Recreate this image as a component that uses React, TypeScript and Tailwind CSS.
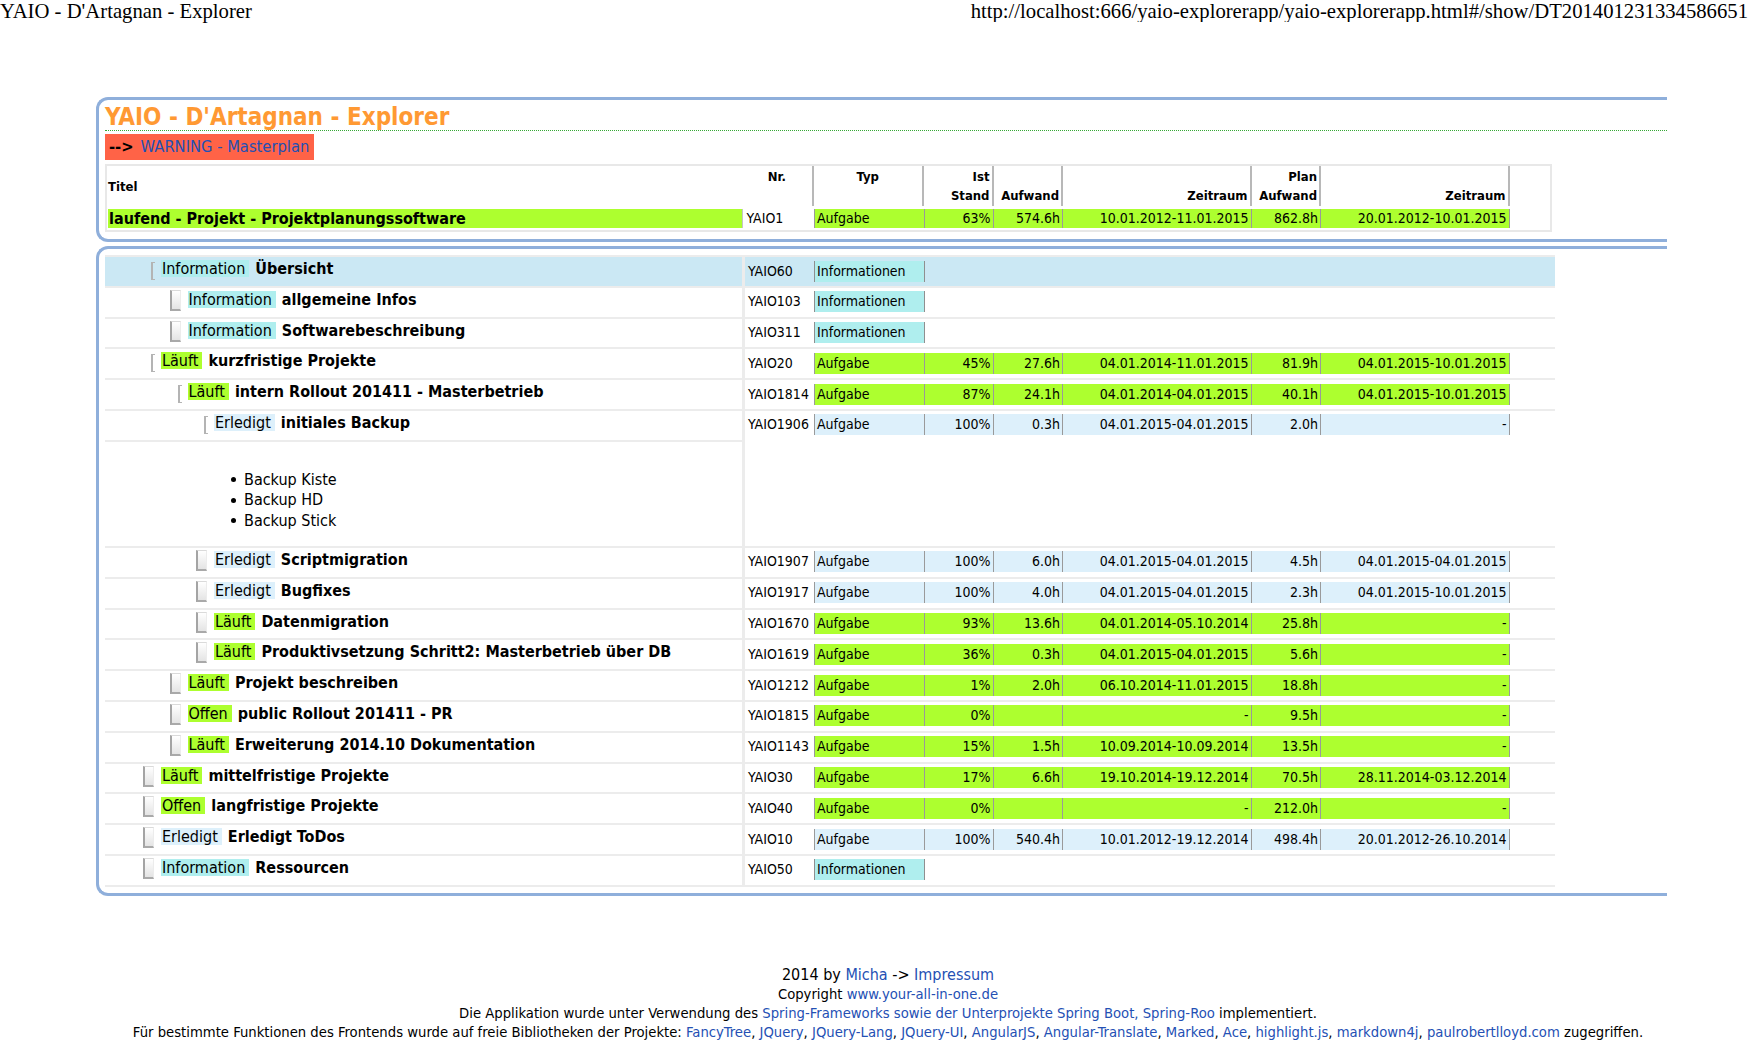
import React from 'react';

const F = "font-['DejaVu_Sans_Condensed','DejaVu_Sans',sans-serif] [font-stretch:semi-condensed]";

type Status = 'info' | 'run' | 'open' | 'done';
type Row = {
  level: 1 | 2 | 3;
  exp?: boolean;
  status: Status;
  title: string;
  nr: string;
  ist?: string;
  aufw?: string;
  zr?: string;
  plan?: string;
  zr2?: string;
  desc?: string[];
  hl?: boolean;
};

const rows: Row[] = [
  { level: 1, exp: true, status: 'info', title: 'Übersicht', nr: 'YAIO60', hl: true },
  { level: 2, status: 'info', title: 'allgemeine Infos', nr: 'YAIO103' },
  { level: 2, status: 'info', title: 'Softwarebeschreibung', nr: 'YAIO311' },
  { level: 1, exp: true, status: 'run', title: 'kurzfristige Projekte', nr: 'YAIO20', ist: '45%', aufw: '27.6h', zr: '04.01.2014-11.01.2015', plan: '81.9h', zr2: '04.01.2015-10.01.2015' },
  { level: 2, exp: true, status: 'run', title: 'intern Rollout 201411 - Masterbetrieb', nr: 'YAIO1814', ist: '87%', aufw: '24.1h', zr: '04.01.2014-04.01.2015', plan: '40.1h', zr2: '04.01.2015-10.01.2015' },
  { level: 3, exp: true, status: 'done', title: 'initiales Backup', nr: 'YAIO1906', ist: '100%', aufw: '0.3h', zr: '04.01.2015-04.01.2015', plan: '2.0h', zr2: '-', desc: ['Backup Kiste', 'Backup HD', 'Backup Stick'] },
  { level: 3, status: 'done', title: 'Scriptmigration', nr: 'YAIO1907', ist: '100%', aufw: '6.0h', zr: '04.01.2015-04.01.2015', plan: '4.5h', zr2: '04.01.2015-04.01.2015' },
  { level: 3, status: 'done', title: 'Bugfixes', nr: 'YAIO1917', ist: '100%', aufw: '4.0h', zr: '04.01.2015-04.01.2015', plan: '2.3h', zr2: '04.01.2015-10.01.2015' },
  { level: 3, status: 'run', title: 'Datenmigration', nr: 'YAIO1670', ist: '93%', aufw: '13.6h', zr: '04.01.2014-05.10.2014', plan: '25.8h', zr2: '-' },
  { level: 3, status: 'run', title: 'Produktivsetzung Schritt2: Masterbetrieb über DB', nr: 'YAIO1619', ist: '36%', aufw: '0.3h', zr: '04.01.2015-04.01.2015', plan: '5.6h', zr2: '-' },
  { level: 2, status: 'run', title: 'Projekt beschreiben', nr: 'YAIO1212', ist: '1%', aufw: '2.0h', zr: '06.10.2014-11.01.2015', plan: '18.8h', zr2: '-' },
  { level: 2, status: 'open', title: 'public Rollout 201411 - PR', nr: 'YAIO1815', ist: '0%', aufw: '', zr: '-', plan: '9.5h', zr2: '-' },
  { level: 2, status: 'run', title: 'Erweiterung 2014.10 Dokumentation', nr: 'YAIO1143', ist: '15%', aufw: '1.5h', zr: '10.09.2014-10.09.2014', plan: '13.5h', zr2: '-' },
  { level: 1, status: 'run', title: 'mittelfristige Projekte', nr: 'YAIO30', ist: '17%', aufw: '6.6h', zr: '19.10.2014-19.12.2014', plan: '70.5h', zr2: '28.11.2014-03.12.2014' },
  { level: 1, status: 'open', title: 'langfristige Projekte', nr: 'YAIO40', ist: '0%', aufw: '', zr: '-', plan: '212.0h', zr2: '-' },
  { level: 1, status: 'done', title: 'Erledigt ToDos', nr: 'YAIO10', ist: '100%', aufw: '540.4h', zr: '10.01.2012-19.12.2014', plan: '498.4h', zr2: '20.01.2012-26.10.2014' },
  { level: 1, status: 'info', title: 'Ressourcen', nr: 'YAIO50' },
];

const badgeLabel: Record<Status, string> = { info: 'Information', run: 'Läuft', open: 'Offen', done: 'Erledigt' };
const bgOf: Record<Status, string> = {
  info: 'bg-[#afeeee]',
  run: 'bg-[#adff2f]',
  open: 'bg-[#adff2f]',
  done: 'bg-[#ddf0fb]',
};
const levelPad: Record<number, string> = { 1: 'pl-[38px]', 2: 'pl-[64.5px]', 3: 'pl-[91px]' };

function DataCells({ r, h }: { r: Row; h: string }) {
  const bg = bgOf[r.status];
  if (r.status === 'info') {
    return (
      <div className={`flex ${h} border-l border-[#8f8f8f] ${bg}`}>
        <div className="w-[110px] border-r border-[#8f8f8f] pl-[2.5px]">Informationen</div>
      </div>
    );
  }
  return (
    <div className={`flex ${h} border-l border-[#9a9a9a] ${bg}`}>
      <div className="w-[110px] border-r border-[#9a9a9a] pl-[2.5px]">Aufgabe</div>
      <div className="w-[69px] border-r border-[#9a9a9a] pr-[2px] text-right">{r.ist}</div>
      <div className="w-[69.5px] border-r border-[#9a9a9a] pr-[2px] text-right">{r.aufw}</div>
      <div className="w-[188.5px] border-r border-[#9a9a9a] pr-[2px] text-right">{r.zr}</div>
      <div className="w-[69.5px] border-r border-[#9a9a9a] pr-[2px] text-right">{r.plan}</div>
      <div className="w-[188.5px] border-r border-[#9a9a9a] pr-[2px] text-right">{r.zr2}</div>
    </div>
  );
}

function DocIcon() {
  return (
    <div className="mt-[2px] h-[21px] w-[11px] border-b-2 border-l-2 border-r border-t border-b-[#a9a9a9] border-l-[#a4a4a4] border-r-[#ececec] border-t-[#dadada] bg-linear-to-b from-white to-[#e4e4e4]" />
  );
}

function Bracket() {
  return <div className="ml-[8px] mt-[5px] h-[18px] w-[4px] border-b border-l-2 border-t border-[#b4b4b4]" />;
}

function TreeRow({ r }: { r: Row }) {
  return (
    <>
      <div className={`flex h-[30.8px] border-t-2 border-[#ececec] ${r.hl ? 'bg-[#cbe8f4]' : ''}`}>
        <div className={`flex w-[637px] shrink-0 items-start ${levelPad[r.level]}`}>
          <div className="flex w-[18px] shrink-0">{r.exp ? <Bracket /> : <DocIcon />}</div>
          <div className={`mt-[3px] h-[17px] whitespace-nowrap pl-[1px] pr-[4px] text-[16px] leading-[17px] ${bgOf[r.status]}`}>
            {badgeLabel[r.status]}
          </div>
          <div className="ml-[6px] mt-[3px] whitespace-nowrap text-[16px] font-bold leading-[17px]">{r.title}</div>
        </div>
        <div className="w-[3px] shrink-0 bg-[#ececec]" />
        <div className="w-[68.5px] shrink-0 pl-[3px] pt-[3.5px] text-[14px] leading-[21px]">{r.nr}</div>
        <div className="pt-[3.5px] text-[14px] leading-[21px]">
          <DataCells r={r} h="h-[21px]" />
        </div>
      </div>
      {r.desc && (
        <div className="flex h-[106.2px]">
          <div className="w-[637px] shrink-0 border-t-2 border-[#ececec] pl-[126px] pt-[28px] text-[16px] leading-[20.4px]">
            {r.desc.map((d) => (
              <div key={d} className="flex items-center">
                <div className="h-[5px] w-[5px] rounded-full bg-black" />
                <div className="ml-[8px]">{d}</div>
              </div>
            ))}
          </div>
          <div className="w-[3px] shrink-0 bg-[#ececec]" />
        </div>
      )}
    </>
  );
}

const linkC = 'text-[#2450b4]';

export default function App() {
  const top: Row = { level: 1, status: 'run', title: 'laufend - Projekt - Projektplanungssoftware', nr: 'YAIO1', ist: '63%', aufw: '574.6h', zr: '10.01.2012-11.01.2015', plan: '862.8h', zr2: '20.01.2012-10.01.2015' };
  return (
    <div className="min-h-[1059px] bg-white text-black">
      <div className="flex h-[22px] font-['Liberation_Serif',serif] text-[20.7px] leading-[22px]">
        <div className="shrink-0 whitespace-nowrap">YAIO - D'Artagnan - Explorer</div>
        <div className="flex-1 overflow-hidden whitespace-nowrap pr-[3px] text-right">
          http://localhost:666/yaio-explorerapp/yaio-explorerapp.html#/show/DT201401231334586651
        </div>
      </div>

      <div className={F}>
        {/* Box 1 */}
        <div className="ml-[96px] mt-[75px] w-[1571px] rounded-l-[12px] border-[3px] border-r-0 border-[#8fafdb] pb-[7px] pl-[6px] pt-[4px]">
          <div className="border-b border-dotted border-[#35a835] text-[24px] font-bold leading-[26px] text-[#ff9933]">
            YAIO - D'Artagnan - Explorer
          </div>
          <div className="mt-[3px] flex h-[26px] w-fit items-center bg-[#ff6347] pl-[4px] pr-[5px] text-[16.4px] leading-[26px]">
            <span className="font-bold">--&gt;</span>
            <span className={`ml-[7px] ${linkC}`}>WARNING - Masterplan</span>
          </div>
          <div className="mt-[4px] w-[1447px] border-2 border-[#e8e8e8] pb-[2px] pl-[1px]">
            <div className="flex h-[40px] text-[13px] font-bold leading-[19px]">
              <div className="flex w-[634px] shrink-0 items-center">Titel</div>
              <div className="w-[71.5px] shrink-0 border-r-2 border-[#b8b8b8] pt-[1px] text-center">Nr.</div>
              <div className="w-[110.5px] shrink-0 border-r-2 border-[#b8b8b8] pt-[1px] text-center">Typ</div>
              <div className="w-[69.5px] shrink-0 border-r-2 border-[#b8b8b8] pr-[2px] pt-[1px] text-right">
                <div>Ist</div>
                <div>Stand</div>
              </div>
              <div className="w-[69.5px] shrink-0 border-r-2 border-[#b8b8b8] pr-[2px] pt-[1px] text-right">
                <div>&nbsp;</div>
                <div>Aufwand</div>
              </div>
              <div className="w-[188.5px] shrink-0 border-r-2 border-[#b8b8b8] pr-[2px] pt-[1px] text-right">
                <div>&nbsp;</div>
                <div>Zeitraum</div>
              </div>
              <div className="w-[69.5px] shrink-0 border-r-2 border-[#b8b8b8] pr-[2px] pt-[1px] text-right">
                <div>Plan</div>
                <div>Aufwand</div>
              </div>
              <div className="w-[188.5px] shrink-0 border-r-2 border-[#b8b8b8] pr-[2px] pt-[1px] text-right">
                <div>&nbsp;</div>
                <div>Zeitraum</div>
              </div>
            </div>
            <div className="mt-[3px] flex h-[19px] text-[14px] leading-[19px]">
              <div className="w-[634px] shrink-0 whitespace-nowrap bg-[#adff2f] pl-[1px] text-[16px] font-bold">{top.title}</div>
              <div className="w-[71.5px] shrink-0 border-l border-[#c4c4c4] pl-[3.5px]">{top.nr}</div>
              <DataCells r={top} h="h-[19px]" />
            </div>
          </div>
        </div>

        {/* Box 2 */}
        <div className="ml-[96px] mt-[4px] w-[1571px] rounded-l-[12px] border-[3px] border-r-0 border-[#8fafdb] pb-[6px] pl-[6px] pt-[6px]">
          <div className="w-[1450px] border-b-2 border-[#ececec]">
            {rows.map((r) => (
              <TreeRow key={r.nr} r={r} />
            ))}
          </div>
        </div>

        {/* Footer */}
        <div className="ml-[96px] mt-[69px] w-[1584px] text-center">
          <div className="text-[16px] leading-[19px]">
            2014 by <span className={linkC}>Micha</span> -&gt; <span className={linkC}>Impressum</span>
          </div>
          <div className="text-[14.7px] leading-[19px]">
            Copyright <span className={linkC}>www.your-all-in-one.de</span>
          </div>
          <div className="text-[14.7px] leading-[19px]">
            Die Applikation wurde unter Verwendung des{' '}
            <span className={linkC}>Spring-Frameworks sowie der Unterprojekte Spring Boot, Spring-Roo</span> implementiert.
          </div>
          <div className="whitespace-nowrap text-[14.7px] leading-[19px]">
            Für bestimmte Funktionen des Frontends wurde auf freie Bibliotheken der Projekte:{' '}
            <span className={linkC}>FancyTree</span>, <span className={linkC}>JQuery</span>,{' '}
            <span className={linkC}>JQuery-Lang</span>, <span className={linkC}>JQuery-UI</span>,{' '}
            <span className={linkC}>AngularJS</span>, <span className={linkC}>Angular-Translate</span>,{' '}
            <span className={linkC}>Marked</span>, <span className={linkC}>Ace</span>,{' '}
            <span className={linkC}>highlight.js</span>, <span className={linkC}>markdown4j</span>,{' '}
            <span className={linkC}>paulrobertlloyd.com</span> zugegriffen.
          </div>
        </div>
      </div>
    </div>
  );
}
